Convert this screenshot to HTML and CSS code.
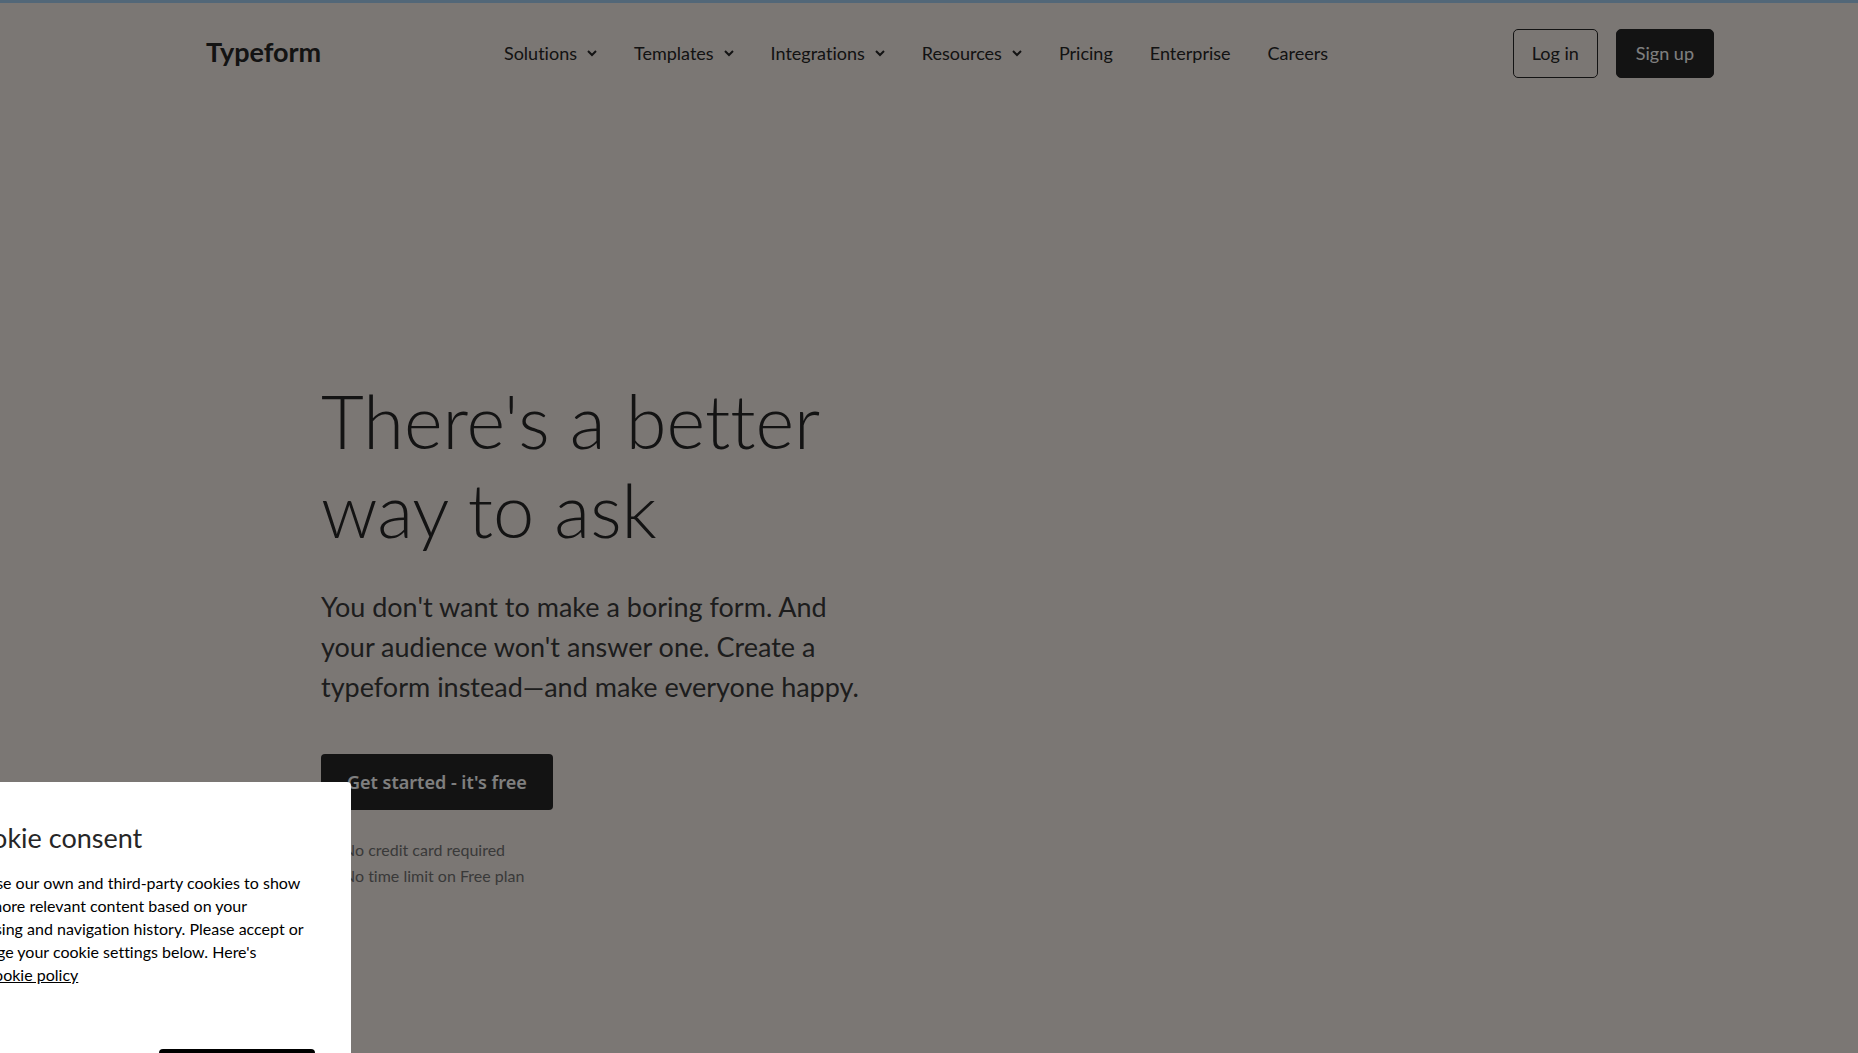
FILE: index.html
```html
<!DOCTYPE html>
<html lang="en">
<head>
  <meta charset="UTF-8" />
  <title>Typeform</title>
  <meta name="viewport" content="width=device-width, initial-scale=1.0" />
  <link rel="stylesheet" href="styles.css">
</head>
<body>
  <header class="site-header">
    <a href="#" class="logo">Typeform</a>

    <nav class="main-nav">
      <button class="nav-item">Solutions <svg class="chevron" viewBox="0 0 10 8"><path d="M1 2l4 4 4-4" /></svg></button>
      <button class="nav-item">Templates <svg class="chevron" viewBox="0 0 10 8"><path d="M1 2l4 4 4-4" /></svg></button>
      <button class="nav-item">Integrations <svg class="chevron" viewBox="0 0 10 8"><path d="M1 2l4 4 4-4" /></svg></button>
      <button class="nav-item">Resources <svg class="chevron" viewBox="0 0 10 8"><path d="M1 2l4 4 4-4" /></svg></button>
      <a href="#" class="nav-item">Pricing</a>
      <a href="#" class="nav-item">Enterprise</a>
      <a href="#" class="nav-item">Careers</a>
    </nav>

    <div class="account">
      <a href="#" class="btn btn-outline">Log in</a>
      <a href="#" class="btn btn-dark">Sign up</a>
    </div>
  </header>

  <main class="hero">
    <h1 class="hero-title">There's a better<br>way to ask</h1>
    <p class="hero-text">You don't want to make a boring form. And<br>your audience won't answer one. Create a<br>typeform instead—and make everyone happy.</p>
    <a href="#" class="cta">Get started - it's free</a>
    <ul class="perks">
      <li>No credit card required</li>
      <li>No time limit on Free plan</li>
    </ul>
  </main>

  <div class="backdrop"></div>

  <div class="cookie-dialog" role="dialog" aria-labelledby="cookie-title">
    <h2 class="cookie-title" id="cookie-title">Cookie consent</h2>
    <p class="cookie-text">We use our own and third-party cookies to show<br>you more relevant content based on your<br>browsing and navigation history. Please accept or<br>manage your cookie settings below. Here's<br>our <a href="#">cookie policy</a></p>
    <div class="cookie-actions">
      <button class="cookie-accept" aria-label="Accept"></button>
    </div>
  </div>
</body>
</html>
```

FILE: styles.css
```css
* {
  box-sizing: border-box;
}

html, body {
  margin: 0;
  padding: 0;
}

body {
  min-height: 100vh;
  font-family: Lato, sans-serif;
  font-size: 18px;
  font-variant-ligatures: none;
  color: #262627;
  background: #f7eee8;
  border-top: 3px solid #a5cff0;
  overflow: hidden;
}

a {
  color: inherit;
  text-decoration: none;
}

.site-header {
  display: flex;
  align-items: center;
  justify-content: space-between;
  padding: 26px 144px 26px 206px;
}

.logo {
  padding-bottom: 3px;
  font-size: 27px;
  font-weight: 700;
  line-height: 36px;
}

.main-nav {
  display: flex;
  align-items: center;
  gap: 37px;
  padding: 0 2px 2px 0;
}

.nav-item {
  display: flex;
  align-items: center;
  gap: 10px;
  padding: 0;
  border: none;
  background: none;
  font: inherit;
  line-height: 24px;
  color: inherit;
  cursor: pointer;
}

.chevron {
  width: 10px;
  height: 8px;
  fill: none;
  stroke: currentColor;
  stroke-width: 2;
}

.account {
  display: flex;
  gap: 18px;
}

.btn {
  height: 49px;
  padding: 0 18px;
  border: 1px solid #262627;
  border-radius: 5px;
  line-height: 46px;
}

.btn-dark {
  padding: 0 19px;
  background: #262627;
  color: #fff;
}

.hero {
  padding: 272px 24px 0 321px;
}

.hero-title {
  margin: 0 0 33px;
  font-size: 74px;
  font-weight: 300;
  line-height: 89px;
}

.hero-text {
  margin: 0 0 47px;
  font-size: 27px;
  line-height: 40px;
  color: #3a3a3b;
}

.cta {
  display: inline-block;
  padding: 0 26px;
  border-radius: 4px;
  font-family: "Noto Sans", sans-serif;
  font-weight: 600;
  line-height: 56px;
  background: #262627;
  color: #fff;
}

.perks {
  margin: 27px 0 0;
  padding: 0 0 0 22px;
  list-style: none;
  font-size: 16px;
  line-height: 26px;
  color: #737373;
}

.backdrop {
  position: fixed;
  inset: 0;
  background: rgba(0, 0, 0, 0.5);
}

.cookie-dialog {
  position: fixed;
  left: -77px;
  top: 782px;
  width: 428px;
  padding: 36px;
  border-radius: 4px;
  background: #fff;
  color: #000;
}

.cookie-title {
  margin: 0 0 13px;
  font-size: 27px;
  font-weight: 400;
  line-height: 40px;
  color: #262627;
}

.cookie-text {
  margin: 0 0 63px;
  font-size: 16px;
  line-height: 23px;
  white-space: nowrap;
}

.cookie-text a {
  text-decoration: underline;
}

.cookie-actions {
  display: flex;
  justify-content: flex-end;
}

.cookie-accept {
  width: 156px;
  height: 50px;
  border: none;
  border-radius: 4px;
  background: #000;
}
```
